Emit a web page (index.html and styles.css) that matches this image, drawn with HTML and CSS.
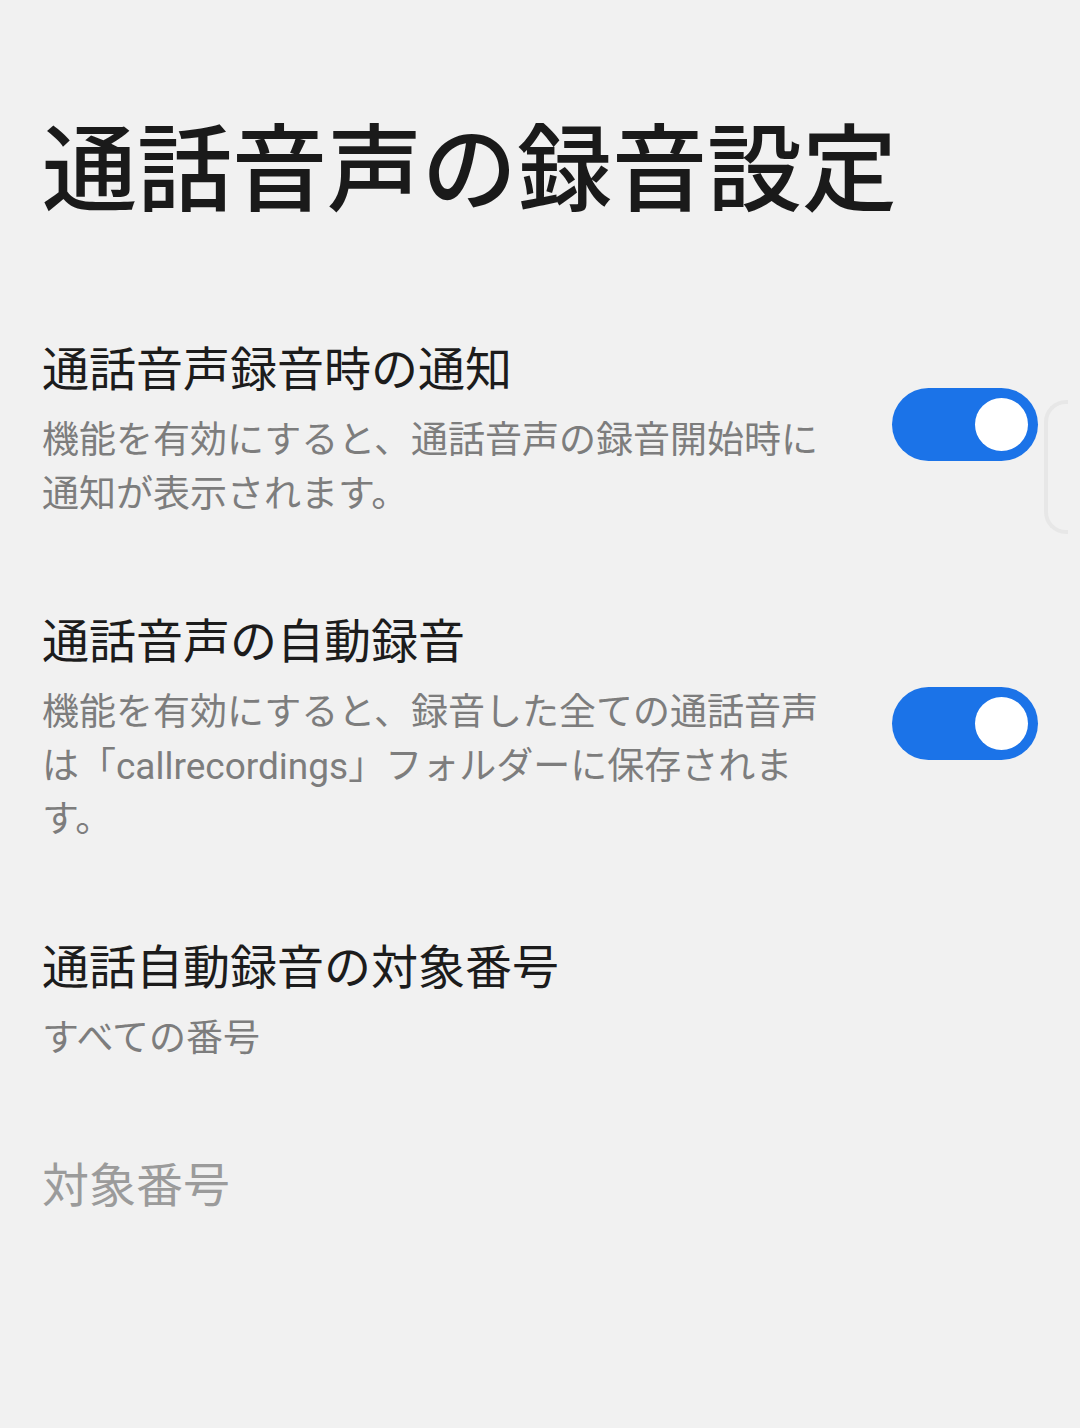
FILE: index.html
```html
<!DOCTYPE html>
<html lang="ja">
<head>
  <meta charset="UTF-8">
  <meta name="viewport" content="width=device-width, initial-scale=1.0">
  <title>通話音声の録音設定</title>
  <link rel="stylesheet" href="styles.css">
</head>
<body>
  <div id="page">
    <h1 id="page-title">通話音声の録音設定</h1>

    <div id="settings">
      <div class="setting-row">
        <div class="setting-text">
          <div class="setting-title">通話音声録音時の通知</div>
          <div class="setting-desc">機能を有効にすると、通話音声の録音開始時に通知が表示されます。</div>
        </div>
        <div class="switch on"><span class="knob"></span></div>
      </div>

      <div class="setting-row">
        <div class="setting-text">
          <div class="setting-title">通話音声の自動録音</div>
          <div class="setting-desc">機能を有効にすると、録音した全ての通話音声は「callrecordings」フォルダーに保存されます。</div>
        </div>
        <div class="switch on"><span class="knob"></span></div>
      </div>

      <div class="setting-row">
        <div class="setting-text">
          <div class="setting-title">通話自動録音の対象番号</div>
          <div class="setting-desc">すべての番号</div>
        </div>
      </div>

      <div class="setting-row">
        <div class="setting-text">
          <div class="setting-title disabled">対象番号</div>
        </div>
      </div>
    </div>
  </div>

  <div id="edge-handle"></div>
</body>
</html>
```

FILE: styles.css
```css
body {
  margin: 0;
  padding: 0;
  background-color: #f1f1f1;
  font-family: Roboto, "Noto Sans CJK JP", sans-serif;
  color: #1c1c1c;
  height: 100vh;
  overflow: hidden;
  position: relative;
}
#page {
  padding: 112px 42px 0 42px;
}
#page-title {
  margin: 0;
  font-size: 95px;
  line-height: 120px;
  font-weight: 500;
  color: #1a1a1a;
  white-space: nowrap;
}
#settings {
  margin-top: 108px;
  display: flex;
  flex-direction: column;
  gap: 91px;
}
.setting-row {
  display: flex;
  align-items: center;
  justify-content: space-between;
}
.setting-text {
  width: 800px;
}
.setting-title {
  font-size: 47px;
  line-height: 60px;
  font-weight: 400;
  white-space: nowrap;
}
.setting-title.disabled {
  color: #9b9b9b;
}
.setting-desc {
  margin-top: 14px;
  font-size: 37px;
  line-height: 53.5px;
  color: #7d7d7d;
}
.switch {
  width: 146px;
  height: 73px;
  border-radius: 37px;
  background-color: #1b73e8;
  display: flex;
  align-items: center;
  justify-content: flex-end;
  padding: 0 10px;
  box-sizing: border-box;
  flex-shrink: 0;
  margin-bottom: 12px;
}
.switch .knob {
  width: 53px;
  height: 53px;
  border-radius: 50%;
  background-color: #fff;
}
#edge-handle {
  position: absolute;
  top: 400px;
  left: 1044px;
  width: 24px;
  height: 134px;
  border: 4px solid #e7e7e7;
  border-right: none;
  border-radius: 22px 0 0 22px;
  box-sizing: border-box;
}
```
